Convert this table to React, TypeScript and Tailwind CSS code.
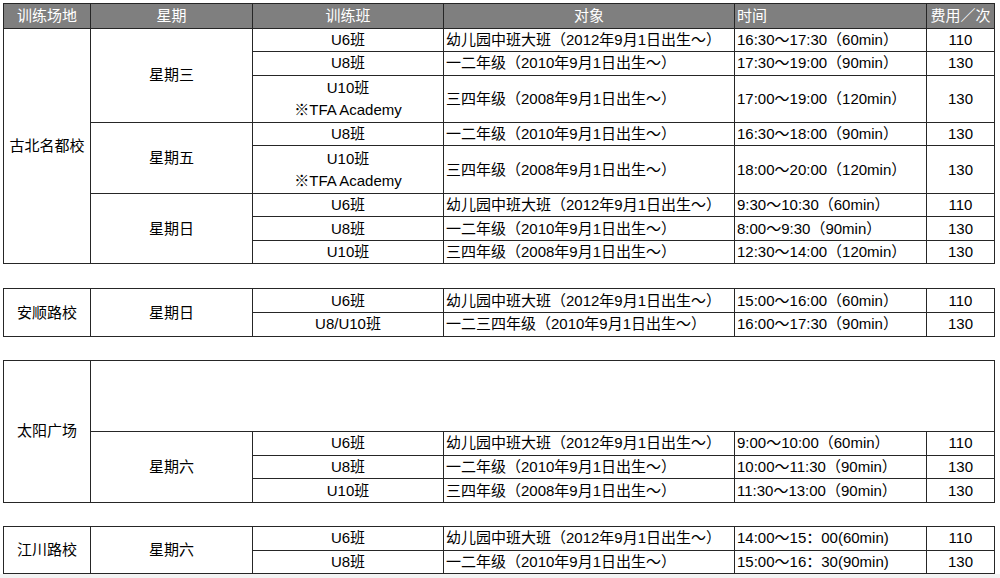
type Row = {
  cls: string;
  target: string;
  time: string;
  fee: string;
  tall?: boolean;
};

type Day = { day: string; rows: Row[] };

type Venue = { name: string; blank?: boolean; days: Day[] };

const venues: Venue[] = [
  {
    name: '古北名都校',
    days: [
      {
        day: '星期三',
        rows: [
          { cls: 'U6班', target: '幼儿园中班大班（2012年9月1日出生～）', time: '16:30～17:30（60min）', fee: '110' },
          { cls: 'U8班', target: '一二年级（2010年9月1日出生～）', time: '17:30～19:00（90min）', fee: '130' },
          { cls: 'U10班', target: '三四年级（2008年9月1日出生～）', time: '17:00～19:00（120min）', fee: '130', tall: true },
        ],
      },
      {
        day: '星期五',
        rows: [
          { cls: 'U8班', target: '一二年级（2010年9月1日出生～）', time: '16:30～18:00（90min）', fee: '130' },
          { cls: 'U10班', target: '三四年级（2008年9月1日出生～）', time: '18:00～20:00（120min）', fee: '130', tall: true },
        ],
      },
      {
        day: '星期日',
        rows: [
          { cls: 'U6班', target: '幼儿园中班大班（2012年9月1日出生～）', time: '9:30～10:30（60min）', fee: '110' },
          { cls: 'U8班', target: '一二年级（2010年9月1日出生～）', time: '8:00～9:30（90min）', fee: '130' },
          { cls: 'U10班', target: '三四年级（2008年9月1日出生～）', time: '12:30～14:00（120min）', fee: '130' },
        ],
      },
    ],
  },
  {
    name: '安顺路校',
    days: [
      {
        day: '星期日',
        rows: [
          { cls: 'U6班', target: '幼儿园中班大班（2012年9月1日出生～）', time: '15:00～16:00（60min）', fee: '110' },
          { cls: 'U8/U10班', target: '一二三四年级（2010年9月1日出生～）', time: '16:00～17:30（90min）', fee: '130' },
        ],
      },
    ],
  },
  {
    name: '太阳广场',
    blank: true,
    days: [
      {
        day: '星期六',
        rows: [
          { cls: 'U6班', target: '幼儿园中班大班（2012年9月1日出生～）', time: '9:00～10:00（60min）', fee: '110' },
          { cls: 'U8班', target: '一二年级（2010年9月1日出生～）', time: '10:00～11:30（90min）', fee: '130' },
          { cls: 'U10班', target: '三四年级（2008年9月1日出生～）', time: '11:30～13:00（90min）', fee: '130' },
        ],
      },
    ],
  },
  {
    name: '江川路校',
    days: [
      {
        day: '星期六',
        rows: [
          { cls: 'U6班', target: '幼儿园中班大班（2012年9月1日出生～）', time: '14:00～15：00(60min)', fee: '110' },
          { cls: 'U8班', target: '一二年级（2010年9月1日出生～）', time: '15:00～16：30(90min)', fee: '130' },
        ],
      },
    ],
  },
];

// space above each table, matching the screenshot
const gaps = ['mt-0', 'mt-[24px]', 'mt-[23px]', 'mt-[23px]'];

const cell = 'border border-[#262626] p-0 align-middle leading-[22px]';

function Cols() {
  return (
    <colgroup>
      <col className="w-[87px]" />
      <col className="w-[162px]" />
      <col className="w-[191px]" />
      <col className="w-[291px]" />
      <col className="w-[192px]" />
      <col className="w-[68px]" />
    </colgroup>
  );
}

function VenueTable({ venue, header, className }: { venue: Venue; header?: boolean; className?: string }) {
  const daySpan = (d: Day) => d.rows.length;
  const venueSpan = venue.days.reduce((n, d) => n + daySpan(d), 0) + (venue.blank ? 1 : 0);

  return (
    <table className={`table-fixed border-collapse w-[991px] ml-[3px] text-[15px] text-black ${className ?? ''}`}>
      <Cols />
      {header && (
        <thead>
          <tr className="h-[24.5px] bg-[#7f7f7f] text-white">
            <th className={`${cell} font-normal text-center`}>训练场地</th>
            <th className={`${cell} font-normal text-center`}>星期</th>
            <th className={`${cell} font-normal text-center`}>训练班</th>
            <th className={`${cell} font-normal text-center`}>对象</th>
            <th className={`${cell} font-normal text-left pl-[2px]`}>时间</th>
            <th className={`${cell} font-normal text-center`}>费用／次</th>
          </tr>
        </thead>
      )}
      <tbody>
        {venue.blank && (
          <tr className="h-[71.5px]">
            <td rowSpan={venueSpan} className={`${cell} text-center`}>
              {venue.name}
            </td>
            <td colSpan={5} className="border border-[#262626]" />
          </tr>
        )}
        {venue.days.map((d, di) =>
          d.rows.map((r, ri) => (
            <tr key={`${di}-${ri}`} className={r.tall ? 'h-[47.2px]' : 'h-[23.6px]'}>
              {!venue.blank && di === 0 && ri === 0 && (
                <td rowSpan={venueSpan} className={`${cell} text-center`}>
                  {venue.name}
                </td>
              )}
              {ri === 0 && (
                <td rowSpan={daySpan(d)} className={`${cell} text-center`}>
                  {d.day}
                </td>
              )}
              <td className={`${cell} text-center`}>
                {r.tall ? (
                  <div className="flex flex-col">
                    <span>{r.cls}</span>
                    <span>※TFA Academy</span>
                  </div>
                ) : (
                  r.cls
                )}
              </td>
              <td className={`${cell} text-left pl-[2px] whitespace-nowrap`}>{r.target}</td>
              <td className={`${cell} text-left pl-[2px] whitespace-nowrap`}>{r.time}</td>
              <td className={`${cell} text-center`}>{r.fee}</td>
            </tr>
          )),
        )}
      </tbody>
    </table>
  );
}

export default function App() {
  return (
    <div
      className="w-[1000px] h-[578px] overflow-hidden bg-white pt-[3px]"
      style={{ fontFamily: '"Liberation Sans", "Noto Sans CJK SC", sans-serif' }}
    >
      <div className="flex flex-col">
        {venues.map((v, i) => (
          <VenueTable key={v.name} venue={v} header={i === 0} className={gaps[i]} />
        ))}
      </div>
      <div className="h-[10px] bg-[#f3f3f3]" />
    </div>
  );
}
